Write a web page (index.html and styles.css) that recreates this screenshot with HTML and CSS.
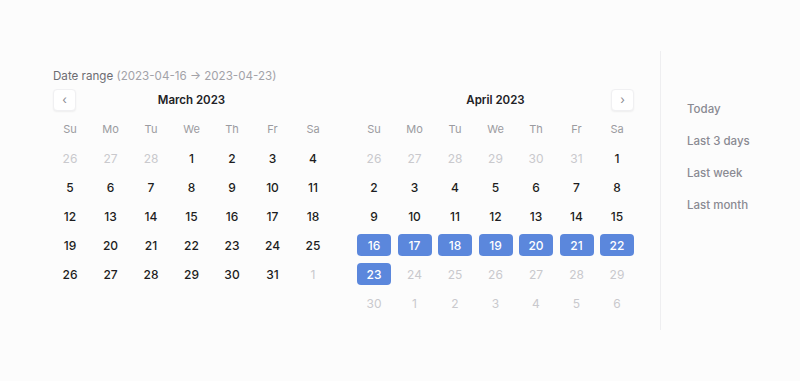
FILE: index.html
```html
<!DOCTYPE html>
<html lang="en">
<head>
    <meta charset="UTF-8">
    <meta name="viewport" content="width=device-width, initial-scale=1.0">
    <title>Date range picker</title>
    <link rel="stylesheet" href="styles.css">
</head>
<body>

    <div class="picker">
        <div class="picker-main">
            <div class="range-label">Date range <span>(2023-04-16 &rarr; 2023-04-23)</span></div>

            <div class="months">
                <!-- March -->
                <div class="month">
                    <div class="month-head">
                        <button class="nav-btn">&lsaquo;</button>
                        <div class="month-title">March 2023</div>
                        <span></span>
                    </div>
                    <div class="days">
                        <div class="wd">Su</div><div class="wd">Mo</div><div class="wd">Tu</div><div class="wd">We</div><div class="wd">Th</div><div class="wd">Fr</div><div class="wd">Sa</div>
                        <div class="day muted">26</div><div class="day muted">27</div><div class="day muted">28</div><div class="day">1</div><div class="day">2</div><div class="day">3</div><div class="day">4</div>
                        <div class="day">5</div><div class="day">6</div><div class="day">7</div><div class="day">8</div><div class="day">9</div><div class="day">10</div><div class="day">11</div>
                        <div class="day">12</div><div class="day">13</div><div class="day">14</div><div class="day">15</div><div class="day">16</div><div class="day">17</div><div class="day">18</div>
                        <div class="day">19</div><div class="day">20</div><div class="day">21</div><div class="day">22</div><div class="day">23</div><div class="day">24</div><div class="day">25</div>
                        <div class="day">26</div><div class="day">27</div><div class="day">28</div><div class="day">29</div><div class="day">30</div><div class="day">31</div><div class="day muted">1</div>
                    </div>
                </div>

                <!-- April -->
                <div class="month">
                    <div class="month-head">
                        <span></span>
                        <div class="month-title">April 2023</div>
                        <button class="nav-btn">&rsaquo;</button>
                    </div>
                    <div class="days">
                        <div class="wd">Su</div><div class="wd">Mo</div><div class="wd">Tu</div><div class="wd">We</div><div class="wd">Th</div><div class="wd">Fr</div><div class="wd">Sa</div>
                        <div class="day muted">26</div><div class="day muted">27</div><div class="day muted">28</div><div class="day muted">29</div><div class="day muted">30</div><div class="day muted">31</div><div class="day">1</div>
                        <div class="day">2</div><div class="day">3</div><div class="day">4</div><div class="day">5</div><div class="day">6</div><div class="day">7</div><div class="day">8</div>
                        <div class="day">9</div><div class="day">10</div><div class="day">11</div><div class="day">12</div><div class="day">13</div><div class="day">14</div><div class="day">15</div>
                        <div class="day selected">16</div><div class="day selected">17</div><div class="day selected">18</div><div class="day selected">19</div><div class="day selected">20</div><div class="day selected">21</div><div class="day selected">22</div>
                        <div class="day selected">23</div><div class="day muted">24</div><div class="day muted">25</div><div class="day muted">26</div><div class="day muted">27</div><div class="day muted">28</div><div class="day muted">29</div>
                        <div class="day muted">30</div><div class="day muted">1</div><div class="day muted">2</div><div class="day muted">3</div><div class="day muted">4</div><div class="day muted">5</div><div class="day muted">6</div>
                    </div>
                </div>
            </div>
        </div>

        <!-- Presets -->
        <div class="presets">
            <a href="javascript:void(0)">Today</a>
            <a href="javascript:void(0)">Last 3 days</a>
            <a href="javascript:void(0)">Last week</a>
            <a href="javascript:void(0)">Last month</a>
        </div>
    </div>

</body>
</html>
```

FILE: styles.css
```css
/* General */
body {
    margin: 0;
    background-color: #fcfcfc;
    font-family: Inter, "Noto Sans", sans-serif;
    color: #1d1d21;
}

.picker {
    display: flex;
    padding: 51px 0 0 53px;
}

.picker-main {
    padding: 16px 0;
}

.range-label {
    font-size: 11.6px;
    line-height: 18px;
    color: #6c6c72;
    margin-bottom: 3px;
}

.range-label span {
    color: #a2a2a8;
}

/* Months */
.months {
    display: flex;
    gap: 27px;
}

.month {
    width: 277px;
}

.month-head {
    display: grid;
    grid-template-columns: 23px 1fr 23px;
    align-items: center;
    height: 22px;
    margin-bottom: 8px;
}

.month-title {
    text-align: center;
    font-size: 11.5px;
    font-weight: 600;
    line-height: 24px;
    color: #222226;
}

.nav-btn {
    width: 23px;
    height: 22px;
    padding: 0;
    border: 1px solid #f0f0f2;
    border-radius: 4px;
    background: #fff;
    box-shadow: 0 1px 2px rgba(0, 0, 0, 0.06);
    color: #8a8a90;
    font-family: inherit;
    font-size: 12px;
    line-height: 18px;
    cursor: pointer;
}

.days {
    display: grid;
    grid-template-columns: repeat(7, 34px);
    grid-auto-rows: 22px;
    column-gap: 6.5px;
    row-gap: 7px;
}

.wd,
.day {
    display: flex;
    align-items: center;
    justify-content: center;
    border-radius: 4px;
}

.wd {
    font-size: 11px;
    color: #9b9ba0;
}

.day {
    font-size: 12px;
    font-weight: 500;
}

.day.muted {
    color: #c9c9cd;
    font-weight: 400;
}

.day.selected {
    background-color: #5b87dc;
    color: #fff;
}

/* Presets */
.presets {
    display: flex;
    flex-direction: column;
    margin-left: 26px;
    padding: 42px 0 0 26px;
    border-left: 1px solid #eeeef0;
}

.presets a {
    font-size: 11.5px;
    line-height: 32px;
    font-weight: 500;
    color: #8a8a92;
    text-decoration: none;
}
```
